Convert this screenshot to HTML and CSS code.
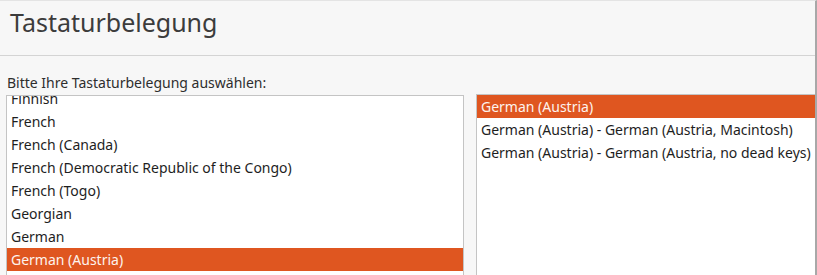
FILE: index.html
```html
<!DOCTYPE html>
<html lang="de">
<head>
    <meta charset="UTF-8">
    <title>Tastaturbelegung</title>
    <link rel="stylesheet" href="styles.css">
</head>
<body>
    <div class="window">
        <div class="header">
            <h1>Tastaturbelegung</h1>
        </div>
        <div class="content">
            <p class="prompt">Bitte Ihre Tastaturbelegung auswählen:</p>
            <div class="lists">
                <div class="list list-layouts">
                    <ul class="rows scrolled">
                        <li>Finnish</li>
                        <li>French</li>
                        <li>French (Canada)</li>
                        <li>French (Democratic Republic of the Congo)</li>
                        <li>French (Togo)</li>
                        <li>Georgian</li>
                        <li>German</li>
                        <li class="selected">German (Austria)</li>
                    </ul>
                </div>
                <div class="list list-variants">
                    <ul class="rows">
                        <li class="selected">German (Austria)</li>
                        <li>German (Austria) - German (Austria, Macintosh)</li>
                        <li>German (Austria) - German (Austria, no dead keys)</li>
                    </ul>
                </div>
            </div>
        </div>
    </div>
</body>
</html>
```

FILE: styles.css
```css
html, body {
    margin: 0;
    height: 100%;
    overflow: hidden;
}
body {
    font-family: "Noto Sans", "DejaVu Sans", sans-serif;
    background-color: #f7f7f7;
    color: #1e1e1e;
}
.window {
    height: 100%;
    border-top: 1px solid #e4e4e4;
    border-right: 2px solid #a8a8a8;
    box-sizing: border-box;
}
.header {
    height: 54px;
    border-bottom: 1px solid #d4d4d4;
    box-sizing: content-box;
    padding-left: 10px;
}
.header h1 {
    margin: 0;
    padding-top: 2px;
    font-size: 25px;
    font-weight: normal;
    color: #3c3c3c;
    line-height: 38px;
}
.content {
    padding-left: 6px;
}
.prompt {
    margin: 0;
    padding: 14px 0 0 1px;
    font-size: 14px;
    line-height: 25px;
    color: #2e2e2e;
}
.lists {
    display: flex;
    gap: 12px;
}
.list {
    background-color: white;
    border: 1px solid #c4c4c4;
    height: 200px;
    overflow: hidden;
}
.list-layouts {
    width: 456px;
}
.list-variants {
    flex: 1;
    margin-top: -1px;
    border-right: none;
}
.rows {
    list-style: none;
    margin: 0;
    padding: 0;
}
.rows.scrolled {
    margin-top: -9px;
}
.rows li {
    height: 23px;
    line-height: 23px;
    padding-left: 4px;
    font-size: 14px;
    white-space: nowrap;
}
.rows li.selected {
    background-color: #df5620;
    color: #fdf3ee;
}
```
